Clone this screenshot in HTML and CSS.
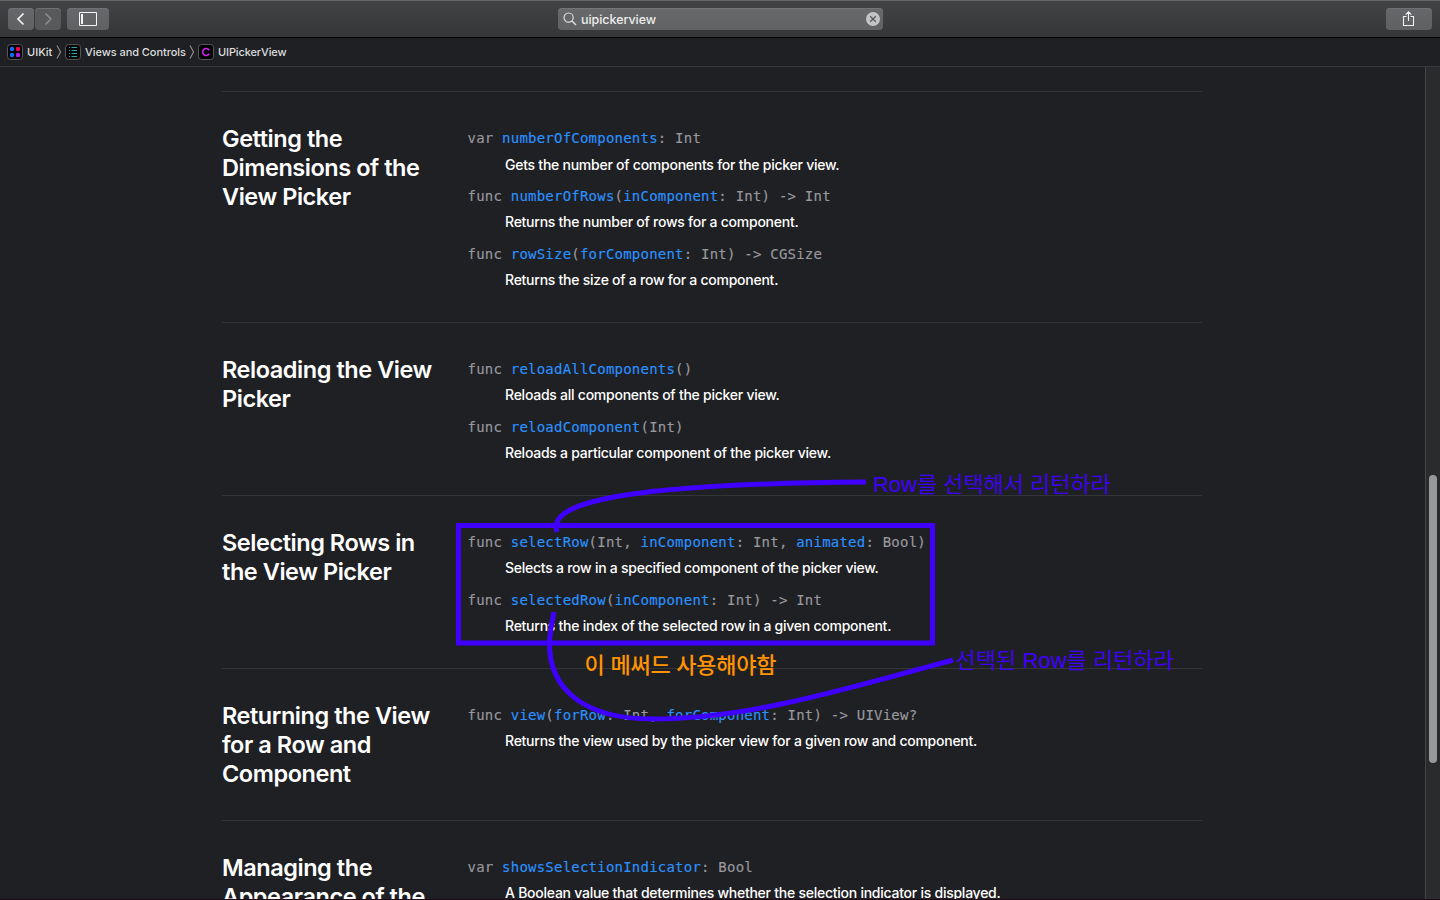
FILE: index.html
```html
<!DOCTYPE html>
<html lang="en">
<head>
<meta charset="utf-8">
<title>UIPickerView</title>
<link rel="stylesheet" href="styles.css">
</head>
<body>
<div class="window">
  <header class="toolbar">
    <div class="tools">
      <button class="btn nav"><svg width="26" height="22" viewBox="0 0 26 22"><path d="M15.500 5.500 10 11l5.500 5.500" fill="none" stroke="#f2f2f2" stroke-width="1.700"/></svg></button>
      <button class="btn nav off"><svg width="26" height="22" viewBox="0 0 26 22"><path d="M10.500 5.500 16 11l-5.500 5.500" fill="none" stroke="#8d8e8f" stroke-width="1.500"/></svg></button>
      <button class="btn side"><svg width="42" height="22" viewBox="0 0 42 22"><path d="M12.500 4.500h17v13h-17z" fill="none" stroke="#f5f5f5"/><path d="M14 6h2v10h-2z" fill="#f5f5f5"/></svg></button>
    </div>
    <div class="search">
      <svg width="14" height="14" viewBox="0 0 14 14"><circle cx="5.600" cy="5.600" r="4.600" fill="none" stroke="#dedede" stroke-width="1.200"/><path d="m9 9 4 4" stroke="#dedede" stroke-width="1.400"/></svg>
      <span class="query">uipickerview</span>
      <svg width="14" height="14" viewBox="0 0 14 14"><circle cx="7" cy="7" r="7" fill="#c3c4c5"/><path d="m4.200 4.200 5.600 5.600m0-5.600-5.600 5.600" stroke="#58595b" stroke-width="1.300"/></svg>
    </div>
    <button class="btn share"><svg width="46" height="22" viewBox="0 0 46 22"><path d="M20.500 8.500h-3v9h10v-9h-3M22.500 13V4M19.700 6.600l2.800-2.800 2.800 2.800" fill="none" stroke="#f0f0f0" stroke-width="1.100"/></svg></button>
  </header>
  <nav class="crumbs">
    <svg class="ico" width="16" height="16" viewBox="0 0 16 16"><rect x=".5" y=".5" width="15" height="15" rx="3" fill="#050506" stroke="#55565a"/><circle cx="5" cy="5" r="2.200" fill="#1a6dff"/><circle cx="11" cy="5" r="2.200" fill="#fb0050"/><circle cx="5" cy="11" r="2.200" fill="#0a72f5"/><circle cx="11" cy="11" r="2.200" fill="#b41df0"/></svg>
    <span class="c1">UIKit</span>
    <svg class="sep" width="6" height="14" viewBox="0 0 6 14"><path d="M1 .5 4.500 7 1 13.500" fill="none" stroke="#929396" stroke-width="1.100"/></svg>
    <svg class="ico" width="16" height="16" viewBox="0 0 16 16"><rect x=".5" y=".5" width="15" height="15" rx="3" fill="#050506" stroke="#55565a"/><path d="M4 3.500h1m1.500 0H12M4 6.500h1m1.500 0H12M4 9.500h1m1.500 0H12M4 12.500h1m1.500 0H12" stroke="#2aa5a5"/></svg>
    <span class="c2">Views and Controls</span>
    <svg class="sep" width="6" height="14" viewBox="0 0 6 14"><path d="M1 .5 4.500 7 1 13.500" fill="none" stroke="#929396" stroke-width="1.100"/></svg>
    <svg class="ico" width="16" height="16" viewBox="0 0 16 16"><rect x=".5" y=".5" width="15" height="15" rx="3" fill="#050506" stroke="#55565a"/><path d="M11.200 6.300A3.500 3.500 0 1 0 11.200 9.700" fill="none" stroke="#d020f5" stroke-width="1.600"/></svg>
    <span class="c3">UIPickerView</span>
  </nav>
  <div class="view">
    <main class="doc">
      <section class="topic">
        <h2>Getting the<br>Dimensions of the<br>View Picker</h2>
        <dl>
          <dt>var <a>numberOfComponents</a>: Int</dt>
          <dd class="low">Gets the number of components for the picker view.</dd>
          <dt>func <a>numberOfRows</a>(<a>inComponent</a>: Int) -&gt; Int</dt>
          <dd>Returns the number of rows for a component.</dd>
          <dt>func <a>rowSize</a>(<a>forComponent</a>: Int) -&gt; CGSize</dt>
          <dd>Returns the size of a row for a component.</dd>
        </dl>
      </section>
      <section class="topic">
        <h2>Reloading the View<br>Picker</h2>
        <dl>
          <dt>func <a>reloadAllComponents</a>()</dt>
          <dd>Reloads all components of the picker view.</dd>
          <dt>func <a>reloadComponent</a>(Int)</dt>
          <dd>Reloads a particular component of the picker view.</dd>
        </dl>
      </section>
      <section class="topic">
        <h2>Selecting Rows in<br>the View Picker</h2>
        <dl>
          <dt>func <a>selectRow</a>(Int, <a>inComponent</a>: Int, <a>animated</a>: Bool)</dt>
          <dd>Selects a row in a specified component of the picker view.</dd>
          <dt>func <a>selectedRow</a>(<a>inComponent</a>: Int) -&gt; Int</dt>
          <dd>Returns the index of the selected row in a given component.</dd>
        </dl>
      </section>
      <section class="topic">
        <h2>Returning the View<br>for a Row and<br>Component</h2>
        <dl>
          <dt>func <a>view</a>(<a>forRow</a>: Int, <a>forComponent</a>: Int) -&gt; UIView?</dt>
          <dd>Returns the view used by the picker view for a given row and component.</dd>
        </dl>
      </section>
      <section class="topic">
        <h2>Managing the<br>Appearance of the</h2>
        <dl>
          <dt>var <a>showsSelectionIndicator</a>: Bool</dt>
          <dd>A Boolean value that determines whether the selection indicator is displayed.</dd>
        </dl>
      </section>
    </main>
    <aside class="scroll"><div class="thumb"></div></aside>
  </div>
  <svg class="marks" width="1440" height="900" viewBox="0 0 1440 900">
    <g fill="none" stroke="#4000ff" stroke-width="5">
      <rect x="458.500" y="525.500" width="474" height="117.500"/>
      <path d="M557 532C549 508 591 484 866 482"/>
      <path d="M554 612C551 626 550 634 549.500 643C549 690 585 719 653 719C745 719 840 691 953 660"/>
    </g>
    <text class="note" x="873" y="492" textLength="238">Row를 선택해서 리턴하라</text>
    <text class="note" x="955.500" y="668" textLength="218.500">선택된 Row를 리턴하라</text>
    <text class="note hot" x="584.500" y="673" textLength="192">이 메써드 사용해야함</text>
  </svg>
</div>
</body>
</html>
```
FILE: styles.css
```css
* { box-sizing: border-box; }
body { margin: 0; background: #1f2024; color: #fff; font-family: Inter, "Liberation Sans", sans-serif; }
.window { position: relative; width: 1440px; height: 900px; overflow: hidden; display: flex; flex-direction: column; border-bottom: 1px solid #1d0b18; }
svg { display: block; flex: none; }

.toolbar { height: 38px; flex: none; display: grid; grid-template-columns: 1fr 325px 1fr; align-items: center; padding: 0 8px; background: linear-gradient(#424345, #353638); border-top: 1px solid #656668; border-bottom: 1px solid #000; }
.tools { display: flex; gap: 1px; }
.btn { border: 0; padding: 0; height: 22px; border-radius: 4px; background: linear-gradient(#66676a, #606163); box-shadow: inset 0 1px #707173; }
.nav { width: 26px; }
.off { background: #58595b; }
.side { width: 42px; margin-left: 5px; }
.share { width: 46px; justify-self: end; }
.search { height: 22px; display: flex; align-items: center; gap: 4.500px; padding: 0 3px 0 5px; border-radius: 4px; background: linear-gradient(#68696b, #616264); box-shadow: inset 0 1px #747577; }
.query { flex: 1; padding-top: 1px; font-size: 12.500px; font-weight: 500; line-height: 20px; letter-spacing: -.050px; color: #ededed; }

.crumbs { height: 29px; flex: none; display: flex; align-items: center; padding-left: 7px; border-bottom: 1px solid #37383b; font-size: 11px; font-weight: 500; color: #dcdddf; white-space: nowrap; }
.crumbs span { margin-left: 4px; }
.c1 { width: 26px; }
.c2 { width: 101px; letter-spacing: -.060px; }
.c3 { letter-spacing: -.120px; }
.sep { margin: 0 3px; }

.view { flex: 1; min-height: 0; display: flex; }
.doc { flex: 1; padding: 24px 0 0 222px; overflow: hidden; }
.topic { width: 980px; display: grid; grid-template-columns: 245.500px 1fr; padding: 32px 0 24px; border-top: 1px solid #343538; }
h2 { margin: 0; padding-bottom: 8px; font-size: 23.500px; font-weight: 620; line-height: 29px; letter-spacing: -.450px; white-space: nowrap; }
dl { margin: 0; white-space: nowrap; }
dt { font: 14px/28px "DejaVu Sans Mono", monospace; letter-spacing: .220px; color: #98989d; -webkit-text-stroke: .150px; }
dt a { color: #2b91ff; }
dd { margin: 0 0 6px 37.500px; font-size: 14px; font-weight: 500; line-height: 24px; letter-spacing: -.250px; }
.low { padding-top: 1px; margin-bottom: 5px; }
.scroll { width: 15px; border-left: 1px solid #444547; background: #2a2b2c; padding: 408px 0 0 3px; }
.thumb { width: 8px; height: 288px; border-radius: 4px; background: #98999b; }

.marks { position: absolute; left: 0; top: 0; }
.note { font: 350 22px "Liberation Sans", "Noto Sans CJK KR", sans-serif; fill: #4000ff; }
.hot { font-weight: 500; fill: #ff9300; }
```
